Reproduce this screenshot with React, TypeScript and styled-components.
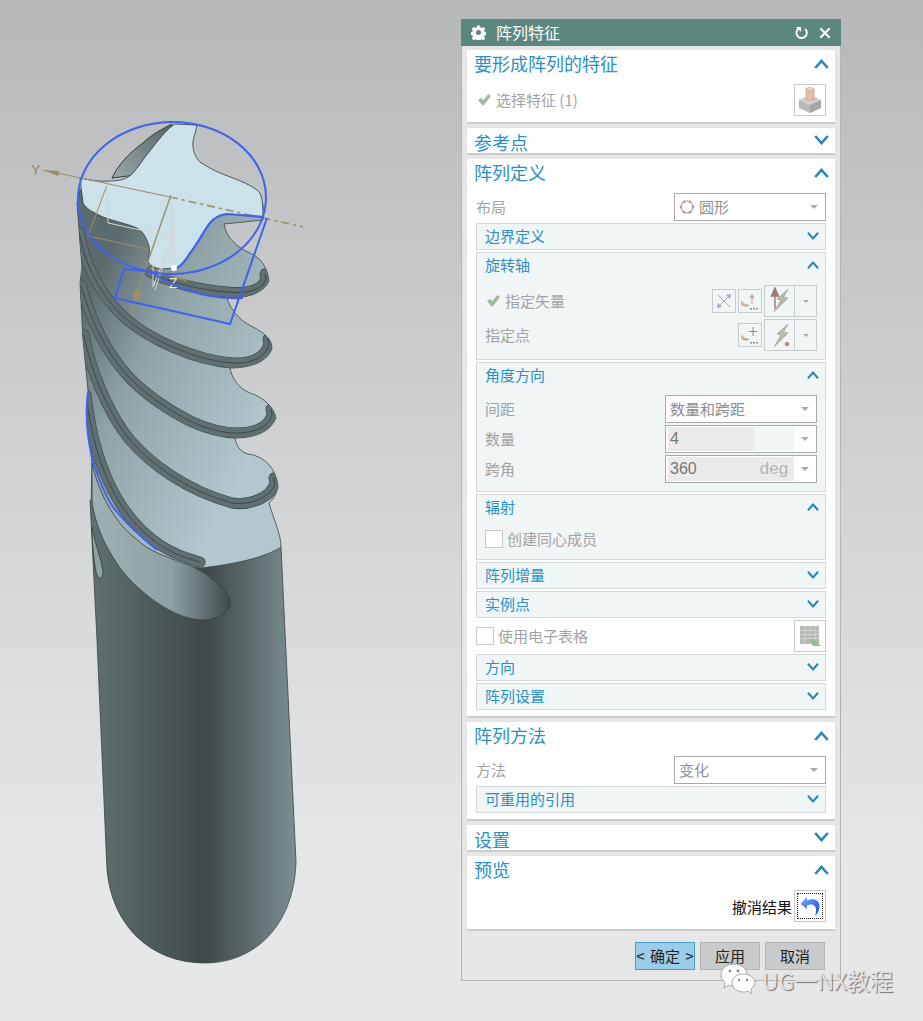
import React from "react";
import styled, { createGlobalStyle } from "styled-components";

const GlobalStyle = createGlobalStyle`
  html, body { margin: 0; padding: 0; }
  body {
    width: 923px;
    height: 1021px;
    overflow: hidden;
    font-family: "Noto Sans CJK SC", "Liberation Sans", sans-serif;
  }
`;

const BLUE = "#3f63ec";
const TAN = "#9c8e69";

const BODY_OUTLINE =
  "M80,190 L263,205 L263,220 L224,224 C226,238 238,248 250,253 C262,258 268,270 269,281 C262,295 245,298 227,298 C230,308 238,320 253,327 C265,333 272,340 272,348 C268,362 250,368 230,368 C232,378 238,388 250,393 C265,398 274,408 276,418 C270,432 255,438 235,438 C236,445 240,452 248,454 C265,456 277,470 278,487 C276,496 272,500 269,503 C274,520 281,535 281,547 C265,558 230,565 200,568 L150,558 L105,520 L91,505 L92,463 L87,420 L88,390 L83,340 L80,283 L82,267 L80,243 L77,203 Z";

// helical ridges of the flutes, from the tip side down to the shank
const ridges = [
  "M150,272 C170,283 200,290 227,292 C245,294 262,291 266,279 L265,274",
  "M79,232 C85,265 100,295 125,318 C150,340 195,360 232,363 C250,364 266,358 269,344 L268,339",
  "M81,285 C88,310 100,345 127,375 C145,395 172,412 190,421 C205,428 220,433 237,433 C252,433 270,428 272,414 L271,409",
  "M84,335 C88,360 105,410 130,440 C150,463 185,490 232,503 C250,506 272,497 275,483 L274,478",
  "M86,395 C90,430 100,470 118,500 C130,520 145,535 160,545 C172,553 185,558 200,562",
];

const Scene = () => (
  <DrillSvg viewBox="0 0 461 1021" width="461" height="1021">
    <defs>
      <linearGradient id="shank" gradientUnits="userSpaceOnUse" x1="95" y1="0" x2="296" y2="0">
        <stop offset="0" stopColor="#5f6f70" />
        <stop offset="0.55" stopColor="#3e4849" />
        <stop offset="1" stopColor="#7d8f93" />
      </linearGradient>
      <linearGradient id="body" gradientUnits="userSpaceOnUse" x1="85" y1="300" x2="280" y2="400">
        <stop offset="0" stopColor="#5c6c6e" />
        <stop offset="0.35" stopColor="#8fa3a7" />
        <stop offset="1" stopColor="#b2c8ce" />
      </linearGradient>
      <linearGradient id="flute" gradientUnits="userSpaceOnUse" x1="95" y1="0" x2="232" y2="0">
        <stop offset="0" stopColor="#9db0b4" />
        <stop offset="0.55" stopColor="#8ea1a5" />
        <stop offset="1" stopColor="#3d4849" />
      </linearGradient>
      <linearGradient id="back" gradientUnits="userSpaceOnUse" x1="115" y1="175" x2="165" y2="130">
        <stop offset="0" stopColor="#95a5a6" />
        <stop offset="1" stopColor="#5f6d6e" />
      </linearGradient>
      <clipPath id="bodyClip">
        <path d={BODY_OUTLINE} />
      </clipPath>
    </defs>

    <path
      d="M90,500 L97,640 L107,870 C112,925 150,963 205,963 C255,963 294,925 296,862 L281,547 L200,563 Z"
      fill="url(#shank)"
      stroke="#3a4445"
      strokeWidth="0.8"
    />
    <path
      d="M112,178 C118,165 130,152 143,143 C150,136 158,131 172,124 L175,170 Z"
      fill="url(#back)"
      stroke="#333c3d"
    />
    <path d={BODY_OUTLINE} fill="url(#body)" stroke="#3a4445" strokeWidth="0.8" />
    <path
      d="M92,463 C98,490 112,520 135,538 C150,552 165,556 183,563 C200,568 225,585 230,600 C232,612 218,620 203,620 C180,620 153,603 130,580 C112,560 95,530 92,500 Z"
      fill="url(#flute)"
      stroke="#333c3d"
      strokeWidth="0.8"
    />
    <path d="M92,527 C95,545 102,560 103,573 C102,580 98,580 96,572 C94,560 92,545 92,527 Z" fill="#8fa2a6" stroke="#333c3d" strokeWidth="0.8" />

    <g clipPath="url(#bodyClip)">
      {ridges.map((d) => (
        <g key={d} fill="none" strokeLinecap="round">
          <path d={d} stroke="#3a4546" strokeWidth="11" />
          <path d={d} stroke="#607072" strokeWidth="9.8" />
          <path d={d} stroke="#3a4546" strokeWidth="0.9" />
        </g>
      ))}
    </g>
    <path d="M88,392 C85,415 88,440 92,457 C98,478 105,495 113,507 C128,526 142,538 157,550" fill="none" stroke={BLUE} strokeWidth="2" />

    <path
      d="M80,178 C90,180 100,182 110,181 C122,181 128,178 133,173 C140,165 146,155 153,147 C160,138 168,128 175,124 L197,125 C196,132 192,140 193,147 C194,154 196,158 200,162 C212,170 222,174 233,178 C245,183 255,187 260,193 C263,200 263,210 263,217 L240,215 L227,214 C218,215 214,218 210,223 C203,232 197,245 190,253 C186,260 182,265 177,268 L160,269 C152,267 148,264 148,260 C150,252 150,248 148,243 C145,235 142,231 137,228 C125,223 113,221 103,217 C93,212 86,209 83,203 Z"
      fill="#cbe2ea"
      stroke="#2f3839"
      strokeWidth="0.8"
    />

    <g fill="none" stroke={TAN}>
      <path d="M43,170 L170,197" strokeWidth="1.2" />
      <path d="M170,197 L303,227" strokeWidth="1.6" strokeDasharray="8 4 3 4" />
      <path d="M171,195 L130,313" strokeWidth="1.4" />
      <path d="M107,185 L88,236 L148,249" strokeWidth="1" />
      <path d="M150,268 L187,281" strokeWidth="1.5" />
    </g>
    <path d="M43,170 L59,171 L58,176 Z" fill={TAN} />
    <path d="M138,287 L142,296 L135,302 L133,294 Z" fill={TAN} />
    <g fill="none" stroke="#d6d6d2" strokeWidth="1">
      <path d="M107,185 L108,223 L173,237 L153,287 L153,262" />
      <path d="M172,195 L173,267" />
      <path d="M173,237 L155,290" />
    </g>
    <AxisLabel x="31" y="175">Y</AxisLabel>
    <AxisLabel x="169" y="288" $light>Z</AxisLabel>
    <circle cx="174" cy="268" r="3" fill="#fff" />

    <g fill="none" stroke={BLUE} strokeWidth="2">
      <ellipse cx="172" cy="198" rx="94" ry="76" transform="rotate(-1 172 198)" />
      <path d="M267,218 L230,324 L115,298 L124,269 L153,272" />
      <path d="M153,273 C165,282 178,287 190,291 C205,296 222,299 243,298" />
    </g>
    <path d="M264,217 L240,215 L227,214 C218,215 214,218 210,223 C203,232 197,245 190,253 C186,260 182,265 177,268" fill="none" stroke={BLUE} strokeWidth="2.2" />
  </DrillSvg>
);

const Chevron = ({ open, small }: { open?: boolean; small?: boolean }) => (
  <ChevronSvg viewBox="0 0 15 10" $small={small} $open={open}>
    <path d={open ? "M1.2,9 L7.5,2 L13.8,9" : "M1.2,1 L7.5,8 L13.8,1"} />
  </ChevronSvg>
);

const Check = () => (
  <svg width="13" height="12" viewBox="0 0 13 12">
    <path d="M0,6.2 L3,3.8 L5.2,6.2 L10.3,0 L13,2 L5.2,12 Z" fill="#9dbb9f" />
  </svg>
);

const FeatureIcon = () => (
  <svg width="24" height="28" viewBox="0 0 24 28">
    <path d="M1,14 L12,9 L23,14 L23,22 L12,27 L1,22 Z" fill="#b8b8b8" />
    <path d="M1,14 L12,19 L23,14 L12,9 Z" fill="#d2d2d2" />
    <path d="M12,19 L23,14 L23,22 L12,27 Z" fill="#a6a6a6" />
    <rect x="8" y="3" width="8" height="11" fill="#e3c0a8" stroke="#c99c80" strokeWidth="0.7" />
    <ellipse cx="12" cy="3" rx="4" ry="1.5" fill="#efd8c6" stroke="#c99c80" strokeWidth="0.6" />
  </svg>
);

const RingIcon = () => (
  <svg width="16" height="16" viewBox="0 0 16 16">
    <circle cx="8" cy="8" r="6" fill="none" stroke="#c9b3b0" strokeWidth="1.5" />
    {[0, 60, 120, 180, 240, 300].map((a) => (
      <circle
        key={a}
        cx={8 + 6 * Math.cos((a * Math.PI) / 180)}
        cy={8 + 6 * Math.sin((a * Math.PI) / 180)}
        r="1.4"
        fill="#b79c99"
      />
    ))}
  </svg>
);

const Bolt = () => <path d="M20,2 L9,12 L13,13 L6,25 L20,11 L15.5,10 Z" fill="#b6bcaa" stroke="#98998c" strokeWidth="0.6" />;

const ReverseIcon = () => (
  <svg width="18" height="18" viewBox="0 0 18 18">
    <path d="M3,15 L15,3 M3,3 L15,15" stroke="#a9a9a9" strokeWidth="1" />
    <path d="M2,16 L3,11 L7,15 Z M16,2 L15,7 L11,3 Z" fill="#a7a5c9" />
  </svg>
);

const InferIcon = ({ plus }: { plus?: boolean }) => (
  <svg width="20" height="20" viewBox="0 0 20 20">
    {plus ? (
      <path d="M13,2 L13,11 M9,6.5 L17,6.5" stroke="#8a8a8a" strokeWidth="1" />
    ) : (
      <path d="M12,3 L9.5,7 L11.5,7 L11.5,13 L12.5,13 L12.5,7 L14.5,7 Z" fill="#c19a92" />
    )}
    <path d="M2,9 C3,13 6,14 8,13 L9,15 C5,17 2,15 1,13 Z" fill="#cbb29a" />
    <path d="M10,17 h2 v1.5 h-2 Z M13,17 h2 v1.5 h-2 Z M16,17 h2 v1.5 h-2 Z" fill="#8f8f8f" />
  </svg>
);

const VectorIcon = () => (
  <svg width="24" height="28" viewBox="0 0 24 28">
    <path d="M7,22 L7,8 M3.5,9 L7,1 L10.5,9 Z" stroke="#a07a76" strokeWidth="1.4" fill="#a07a76" />
    <Bolt />
  </svg>
);

const PointIcon = () => (
  <svg width="24" height="26" viewBox="0 0 24 26">
    <Bolt />
    <circle cx="19" cy="22" r="2.3" fill="#c08a86" />
  </svg>
);

const SheetIcon = () => (
  <svg width="22" height="22" viewBox="0 0 22 22">
    <rect x="1" y="1" width="19" height="18" fill="#b4bcb0" />
    <path d="M1,5.5 H20 M1,9.5 H20 M1,13.5 H20 M6,1 V19 M11,1 V19 M16,1 V19" stroke="#d8dcd6" strokeWidth="0.8" />
    <path d="M9,14 L15,14 L22,21 L14,21 Z" fill="#9dbb9f" />
  </svg>
);

const UndoIcon = () => (
  <svg width="20" height="22" viewBox="0 0 20 22">
    <defs>
      <linearGradient id="undo" x1="0" y1="0" x2="1" y2="1">
        <stop offset="0" stopColor="#79a8f5" />
        <stop offset="1" stopColor="#164ce0" />
      </linearGradient>
    </defs>
    <path
      d="M0.5,9 L7,2 L7,5.5 C13,2.5 19.5,4.5 19.5,11 C19.5,15 17.5,19 15,21 C16.5,17 16.5,13 14.5,11 C12.5,9.2 10,9.3 7,10.5 L7,14 Z"
      fill="url(#undo)"
    />
  </svg>
);

const WeChat = () => (
  <svg width="36" height="33" viewBox="0 0 36 33">
    <g fill="#fff" stroke="#8a8a8a" strokeWidth="0.7">
      <path d="M14,1 C6,1 1,6 1,12 C1,15 3,18 5,20 L4,25 L9,22 C11,23 13,23 15,23 C24,23 27,17 27,12 C27,6 22,1 14,1 Z" />
      <path d="M23,11 C15,11 12,16 12,20 C12,25 17,29 23,29 C25,29 26,29 28,28 L32,31 L31,26 C33,24 35,22 35,20 C35,15 30,11 23,11 Z" />
    </g>
    <g fill="#8a8a8a">
      <circle cx="10" cy="8" r="1.4" />
      <circle cx="18" cy="8" r="1.4" />
      <circle cx="19" cy="17" r="1.2" />
      <circle cx="27" cy="17" r="1.2" />
    </g>
  </svg>
);

export default function App() {
  return (
    <Page>
      <GlobalStyle />
      <Scene />
      <Dialog>
        <TitleBar>
          <TitleGear viewBox="0 0 16 16">
            <path d="M6.6,0.5 h2.8 l0.4,2 1.5,0.7 1.8,-1.1 2,2 -1.1,1.8 0.7,1.5 2,0.4 v2.8 l-2,0.4 -0.7,1.5 1.1,1.8 -2,2 -1.8,-1.1 -1.5,0.7 -0.4,2 h-2.8 l-0.4,-2 -1.5,-0.7 -1.8,1.1 -2,-2 1.1,-1.8 -0.7,-1.5 -2,-0.4 v-2.8 l2,-0.4 0.7,-1.5 -1.1,-1.8 2,-2 1.8,1.1 1.5,-0.7 Z M8,5.2 a2.8,2.8 0 1,0 0.01,0 Z" fillRule="evenodd" />
          </TitleGear>
          <TitleText>阵列特征</TitleText>
          <TitleIcon viewBox="0 0 14 14" $size={13}>
            <path d="M3.6,3 A5.6,5.6 0 1,0 11,3.2" fill="none" stroke="#fff" strokeWidth="2" />
            <path d="M1,1 L6.5,1 L6.5,6.5 Z" fill="#fff" />
          </TitleIcon>
          <TitleIcon viewBox="0 0 14 14" $size={12}>
            <path d="M1.5,1.5 L12.5,12.5 M12.5,1.5 L1.5,12.5" stroke="#fff" strokeWidth="2.4" />
          </TitleIcon>
        </TitleBar>

        <Section>
          <SectionHead>
            <SectionTitle>要形成阵列的特征</SectionTitle>
            <Chevron open />
          </SectionHead>
          <PickRow>
            <Check />
            <MutedText>选择特征 (1)</MutedText>
            <SquareButton><FeatureIcon /></SquareButton>
          </PickRow>
        </Section>

        <Section $collapsed>
          <SectionHead $collapsed>
            <SectionTitle>参考点</SectionTitle>
            <Chevron />
          </SectionHead>
        </Section>

        <Section>
          <SectionHead>
            <SectionTitle>阵列定义</SectionTitle>
            <Chevron open />
          </SectionHead>
          <FieldRow>
            <MutedText>布局</MutedText>
            <Select $width={152}>
              <RingIcon />
              <SelectValue $afterIcon>圆形</SelectValue>
              <Caret />
            </Select>
          </FieldRow>

          <Group>
            <GroupHead>
              <GroupTitle>边界定义</GroupTitle>
              <Chevron small />
            </GroupHead>
          </Group>

          <Group $open>
            <GroupHead $open>
              <GroupTitle>旋转轴</GroupTitle>
              <Chevron small open />
            </GroupHead>
            <ToolRow>
              <Check />
              <MutedText>指定矢量</MutedText>
              <ToolButtons>
                <SmallButton><ReverseIcon /></SmallButton>
                <SmallButton><InferIcon /></SmallButton>
                <SplitButton>
                  <SplitMain><VectorIcon /></SplitMain>
                  <SplitCaret><Caret /></SplitCaret>
                </SplitButton>
              </ToolButtons>
            </ToolRow>
            <ToolRow $plain>
              <MutedText>指定点</MutedText>
              <ToolButtons>
                <SmallButton><InferIcon plus /></SmallButton>
                <SplitButton>
                  <SplitMain><PointIcon /></SplitMain>
                  <SplitCaret><Caret /></SplitCaret>
                </SplitButton>
              </ToolButtons>
            </ToolRow>
          </Group>

          <Group $open>
            <GroupHead $open>
              <GroupTitle>角度方向</GroupTitle>
              <Chevron small open />
            </GroupHead>
            <GroupFields>
              <GroupField>
                <MutedText>间距</MutedText>
                <Select $width={152} $plain>
                  <SelectValue $dark>数量和跨距</SelectValue>
                  <Caret />
                </Select>
              </GroupField>
              <GroupField>
                <MutedText>数量</MutedText>
                <Select $width={152} $plain>
                  <NumberValue>4</NumberValue>
                  <UnitBox />
                  <Caret />
                </Select>
              </GroupField>
              <GroupField>
                <MutedText>跨角</MutedText>
                <Select $width={152} $plain>
                  <NumberValue>360</NumberValue>
                  <UnitBox $filled>deg</UnitBox>
                  <Caret />
                </Select>
              </GroupField>
            </GroupFields>
          </Group>

          <Group $open>
            <GroupHead $open>
              <GroupTitle>辐射</GroupTitle>
              <Chevron small open />
            </GroupHead>
            <CheckRow>
              <CheckBox />
              <MutedText>创建同心成员</MutedText>
            </CheckRow>
          </Group>

          <Group>
            <GroupHead>
              <GroupTitle>阵列增量</GroupTitle>
              <Chevron small />
            </GroupHead>
          </Group>
          <Group>
            <GroupHead>
              <GroupTitle>实例点</GroupTitle>
              <Chevron small />
            </GroupHead>
          </Group>

          <SheetRow>
            <CheckBox />
            <MutedText>使用电子表格</MutedText>
            <SquareButton><SheetIcon /></SquareButton>
          </SheetRow>

          <FlushGroup>
            <GroupHead>
              <GroupTitle>方向</GroupTitle>
              <Chevron small />
            </GroupHead>
          </FlushGroup>
          <Group>
            <GroupHead>
              <GroupTitle>阵列设置</GroupTitle>
              <Chevron small />
            </GroupHead>
          </Group>
        </Section>

        <Section>
          <SectionHead>
            <SectionTitle>阵列方法</SectionTitle>
            <Chevron open />
          </SectionHead>
          <FieldRow>
            <MutedText>方法</MutedText>
            <Select $width={152} $plain>
              <SelectValue>变化</SelectValue>
              <Caret />
            </Select>
          </FieldRow>
          <Group>
            <GroupHead>
              <GroupTitle>可重用的引用</GroupTitle>
              <Chevron small />
            </GroupHead>
          </Group>
        </Section>

        <Section $collapsed>
          <SectionHead $collapsed>
            <SectionTitle>设置</SectionTitle>
            <Chevron />
          </SectionHead>
        </Section>

        <Section>
          <SectionHead>
            <SectionTitle>预览</SectionTitle>
            <Chevron open />
          </SectionHead>
          <PreviewRow>
            <span>撤消结果</span>
            <SquareButton>
              <FocusRing><UndoIcon /></FocusRing>
            </SquareButton>
          </PreviewRow>
        </Section>

        <Footer>
          <ActionButton $primary>&lt; 确定 &gt;</ActionButton>
          <ActionButton>应用</ActionButton>
          <ActionButton>取消</ActionButton>
        </Footer>
      </Dialog>
      <Watermark>
        <WeChat />
        <WatermarkText>UG一NX教程</WatermarkText>
      </Watermark>
    </Page>
  );
}

const Page = styled.div`
  position: relative;
  display: flex;
  align-items: flex-start;
  width: 923px;
  height: 1021px;
  overflow: hidden;
  background: linear-gradient(180deg, #b6b8ba 0%, #cdcfd1 40%, #e6e7e9 85%, #e6e7e9 100%);
`;

const DrillSvg = styled.svg`
  flex: none;
  display: block;
`;

const AxisLabel = styled.text<{ $light?: boolean }>`
  font-family: "Liberation Sans", sans-serif;
  font-size: 14px;
  fill: ${(p) => (p.$light ? "#e8e8e4" : "#8f8a6f")};
`;

const Dialog = styled.div`
  flex: none;
  box-sizing: border-box;
  width: 380px;
  height: 962px;
  margin-top: 19px;
  padding: 0 5px;
  background: #e6e6e6;
  border: 1px solid #b5b5b5;
  border-top: none;
`;

const TitleBar = styled.div`
  display: flex;
  align-items: center;
  height: 27px;
  margin: 0 -6px;
  padding: 0 10px;
  background: #5c877f;
  color: #fff;
`;

const TitleGear = styled.svg`
  width: 15px;
  height: 15px;
  fill: #fff;
`;

const TitleText = styled.span`
  flex: 1;
  margin-left: 10px;
  font-size: 16px;
  line-height: 27px;
`;

const TitleIcon = styled.svg<{ $size: number }>`
  width: ${(p) => p.$size}px;
  height: ${(p) => p.$size}px;
  margin-left: 11px;
`;

const Section = styled.section<{ $collapsed?: boolean }>`
  box-sizing: border-box;
  margin-top: 4px;
  padding: 0 9px 6px;
  background: #fff;
  border-bottom: 2px solid #cccccc;
  ${(p) => p.$collapsed && "height: 27px; padding-bottom: 0;"}
`;

const SectionHead = styled.div<{ $collapsed?: boolean }>`
  display: flex;
  align-items: ${(p) => (p.$collapsed ? "flex-start" : "center")};
  justify-content: space-between;
  height: ${(p) => (p.$collapsed ? "25px" : "34px")};
  margin: 0 0 0 -2px;
  padding-bottom: ${(p) => (p.$collapsed ? "0" : "8px")};
  box-sizing: border-box;
`;

const SectionTitle = styled.span`
  font-size: 18px;
  line-height: 28px;
  color: #2b90c4;
`;

const ChevronSvg = styled.svg<{ $small?: boolean; $open?: boolean }>`
  flex: none;
  width: ${(p) => (p.$small ? "12px" : "15px")};
  height: ${(p) => (p.$small ? "8px" : "10px")};
  margin-right: ${(p) => (p.$small ? "-2px" : "-3px")};
  margin-top: ${(p) => (p.$small ? "0" : p.$open ? "2px" : "7px")};
  path {
    fill: none;
    stroke: #2a85b5;
    stroke-width: 2.6;
  }
`;

const MutedText = styled.span`
  font-size: 15px;
  line-height: 20px;
  color: #a3a3a3;
`;

const PickRow = styled.div`
  display: flex;
  align-items: center;
  gap: 5px;
  height: 32px;
  padding-left: 2px;
  > button {
    margin-left: auto;
  }
`;

const SquareButton = styled.button`
  display: flex;
  flex: none;
  align-items: center;
  justify-content: center;
  box-sizing: border-box;
  width: 32px;
  height: 32px;
  padding: 0;
  background: #fff;
  border: 1px solid #c8c8c8;
`;

const FieldRow = styled.div`
  display: flex;
  align-items: center;
  justify-content: space-between;
  height: 28px;
`;

const Select = styled.div<{ $width: number; $plain?: boolean }>`
  position: relative;
  display: flex;
  flex: none;
  align-items: center;
  gap: 4px;
  box-sizing: border-box;
  width: ${(p) => p.$width}px;
  height: 28px;
  padding: 0 2px 0 ${(p) => (p.$plain ? "2px" : "4px")};
  background: #fff;
  border: 1px solid #a9a9a9;
`;

const SelectValue = styled.span<{ $dark?: boolean; $afterIcon?: boolean }>`
  flex: 1;
  margin-left: ${(p) => (p.$afterIcon ? "0" : "2px")};
  font-size: 15px;
  line-height: 26px;
  color: ${(p) => (p.$dark ? "#8c8c8c" : "#929292")};
`;

const NumberValue = styled.span`
  flex: none;
  box-sizing: border-box;
  width: 86px;
  height: 24px;
  padding-left: 2px;
  background: #ebebeb;
  font-family: "Liberation Sans", sans-serif;
  font-size: 16px;
  line-height: 24px;
  color: #777;
`;

const UnitBox = styled.span<{ $filled?: boolean }>`
  flex: none;
  width: 40px;
  height: 24px;
  margin-left: -4px;
  background: ${(p) => (p.$filled ? "#ebebeb" : "#f0f5f5")};
  font-family: "Liberation Sans", sans-serif;
  font-size: 17px;
  line-height: 24px;
  text-align: center;
  color: #b5b5b5;
`;

const Caret = styled.i`
  flex: none;
  width: 0;
  height: 0;
  margin: 0 5px 0 auto;
  border-left: 4px solid transparent;
  border-right: 4px solid transparent;
  border-top: 4px solid #aaaaaa;
`;

const Group = styled.div<{ $open?: boolean }>`
  box-sizing: border-box;
  margin-top: 2px;
  padding: 0 8px ${(p) => (p.$open ? "8px" : "0")};
  background: #f0f5f5;
  border: 1px solid #d4d8d8;
  ${(p) => !p.$open && "height: 27px;"}
`;

const FlushGroup = styled(Group)`
  margin-top: 0;
`;

const GroupHead = styled.div<{ $open?: boolean }>`
  display: flex;
  align-items: center;
  justify-content: space-between;
  height: ${(p) => (p.$open ? "32px" : "25px")};
  padding-bottom: ${(p) => (p.$open ? "9px" : "2px")};
  box-sizing: border-box;
`;

const GroupTitle = styled.span`
  font-size: 15px;
  line-height: 23px;
  color: #2b90c4;
`;

const ToolRow = styled.div<{ $plain?: boolean }>`
  display: flex;
  align-items: center;
  gap: 5px;
  height: 32px;
  padding-left: ${(p) => (p.$plain ? "0" : "2px")};
  & + & {
    margin-top: 2px;
  }
`;

const ToolButtons = styled.div`
  display: flex;
  align-items: center;
  gap: 2px;
  margin-left: auto;
`;

const SmallButton = styled.div`
  display: flex;
  align-items: center;
  justify-content: center;
  box-sizing: border-box;
  width: 24px;
  height: 24px;
  background: #f0f5f5;
  border: 1px solid #c8cccc;
`;

const SplitButton = styled.div`
  display: flex;
  box-sizing: border-box;
  width: 53px;
  height: 32px;
  border: 1px solid #c8cccc;
`;

const SplitMain = styled.div`
  display: flex;
  flex: 1;
  align-items: center;
  justify-content: center;
  border-right: 1px solid #c8cccc;
`;

const SplitCaret = styled.div`
  display: flex;
  align-items: center;
  justify-content: center;
  width: 21px;
  ${Caret} {
    margin: 0;
    border-left-width: 3px;
    border-right-width: 3px;
    border-top-width: 3px;
  }
`;

const GroupFields = styled.div`
  display: flex;
  flex-direction: column;
  gap: 2px;
`;

const GroupField = styled.div`
  display: flex;
  align-items: center;
  justify-content: space-between;
  height: 28px;
`;

const CheckRow = styled.div`
  display: flex;
  align-items: center;
  gap: 4px;
  height: 24px;
`;

const CheckBox = styled.span`
  flex: none;
  box-sizing: border-box;
  width: 18px;
  height: 18px;
  background: #fff;
  border: 1px solid #c8c8c8;
`;

const SheetRow = styled.div`
  display: flex;
  align-items: center;
  gap: 4px;
  height: 36px;
  > button {
    margin-left: auto;
  }
`;

const PreviewRow = styled.div`
  display: flex;
  align-items: center;
  justify-content: flex-end;
  gap: 2px;
  height: 32px;
  margin-bottom: 1px;
  font-size: 15px;
  color: #111;
`;

const FocusRing = styled.span`
  display: flex;
  align-items: center;
  justify-content: center;
  box-sizing: border-box;
  width: 26px;
  height: 26px;
  border: 1px dotted #222;
`;

const Footer = styled.div`
  display: flex;
  justify-content: flex-end;
  gap: 5px;
  margin-top: 11px;
  padding-right: 10px;
`;

const ActionButton = styled.button<{ $primary?: boolean }>`
  box-sizing: border-box;
  width: 60px;
  height: 28px;
  padding: 0;
  font-family: inherit;
  font-size: 15px;
  line-height: 20px;
  word-spacing: 2px;
  color: #222;
  background: ${(p) => (p.$primary ? "#9bcce8" : "#c9cacc")};
  border: 1px solid ${(p) => (p.$primary ? "#4a9dd0" : "#b4b5b7")};
`;

const Watermark = styled.div`
  position: absolute;
  left: 720px;
  top: 963px;
  display: flex;
  align-items: center;
  gap: 6px;
`;

const WatermarkText = styled.span`
  font-size: 23px;
  line-height: 24px;
  color: #e2e2e2;
  text-shadow: 1px 1px 1px #6f6f6f;
  white-space: nowrap;
`;
